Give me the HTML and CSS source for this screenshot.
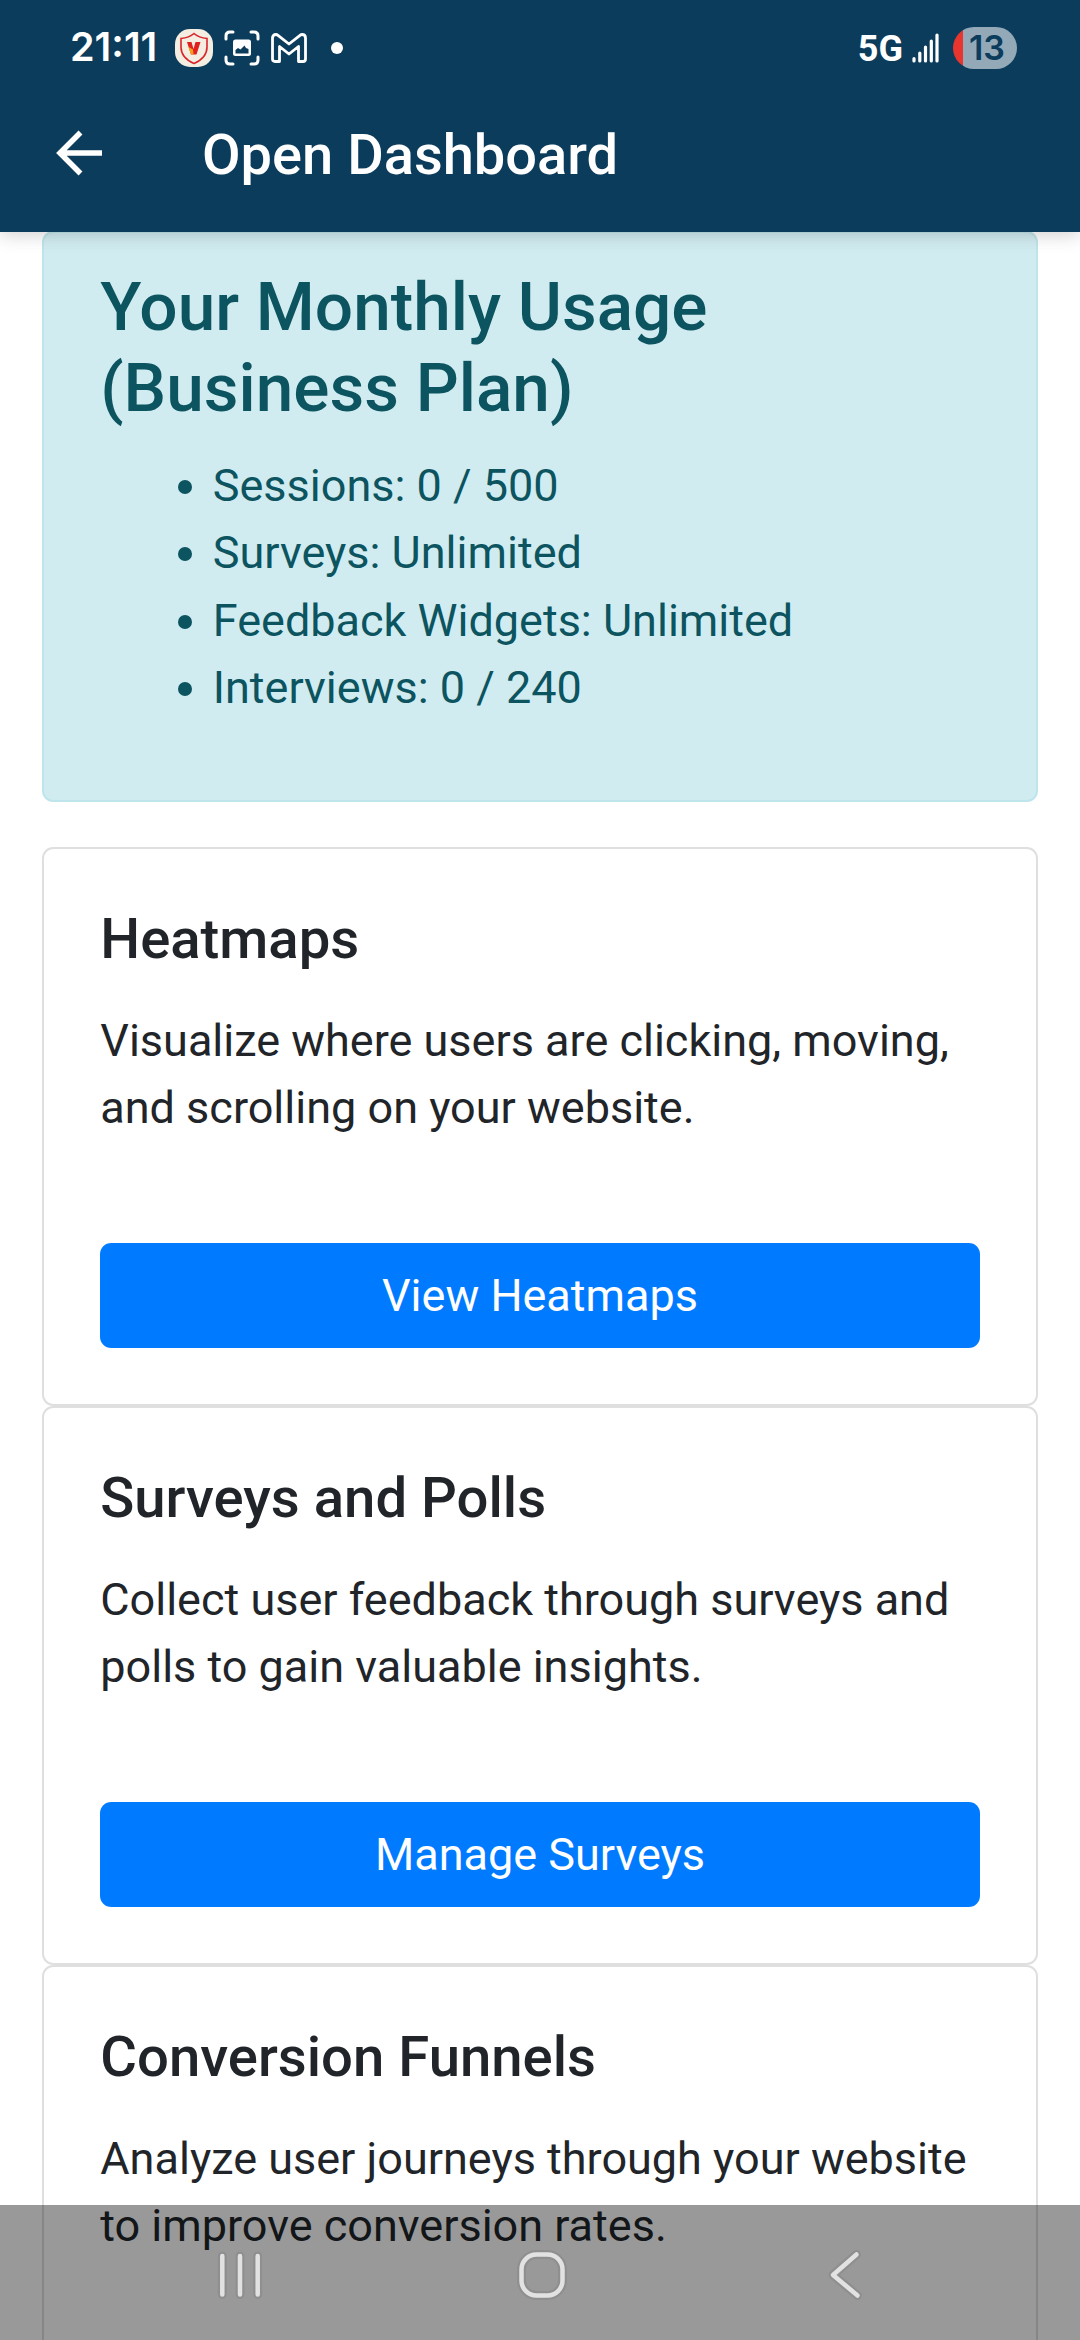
FILE: index.html
```html
<!DOCTYPE html>
<html lang="en">
<head>
    <meta charset="UTF-8">
    <title>Open Dashboard</title>
    <link rel="stylesheet" href="styles.css">
</head>
<body>
    <header class="app-header">
        <div class="status-bar">
            <span class="clock">21:11</span>
            <svg class="shield" width="38" height="38" viewBox="0 0 38 38">
                <rect width="38" height="38" rx="15" fill="#f4ede1"/>
                <path d="M19 4.500C15 8 11 9 6 9.500V18C6 26 11 31 19 34.500C27 31 32 26 32 18V9.500C27 9 23 8 19 4.500Z" fill="none" stroke="#d9252b" stroke-width="1.600"/>
                <path d="M12 13H16.500L18.500 20L20.500 13H25.500L21.500 25.500H16Z" fill="#e0211f"/>
                <path d="M13.500 18L18 20.500L18.500 25.500H16Z" fill="#f6a01c"/>
            </svg>
            <svg class="capture" width="36" height="36" viewBox="0 0 36 36">
                <path d="M2 9V6Q2 2 6 2H9M27 2H30Q34 2 34 6V9M34 27V30Q34 34 30 34H27M9 34H6Q2 34 2 30V27" fill="none" stroke="#fff" stroke-width="3" stroke-linecap="round"/>
                <rect x="9" y="9.500" width="18" height="16.500" rx="2.500" fill="#fff"/>
                <path d="M11.500 23.500V20L14 18L16.500 19.500L20.500 15.500L22 18L24.500 19V23.500Z" fill="#0c3c5c"/>
            </svg>
            <svg class="mail" width="36" height="30" viewBox="0 0 36 30" fill="none" stroke="#fff" stroke-width="2.800" stroke-linejoin="round">
                <path d="M1.500 5Q1.500 1.500 5 1.500Q6 1.500 7 2.300L18 11L29 2.300Q30 1.500 31 1.500Q34.500 1.500 34.500 5V26Q34.500 28.500 32 28.500H27.500V13.500L18 21L8.500 13.500V28.500H4Q1.500 28.500 1.500 26Z"/>
            </svg>
            <span class="dot"></span>
            <span class="network">5G</span>
            <svg class="signal" width="28" height="30" viewBox="0 0 28 30" stroke="#fff" stroke-width="3.200" stroke-linecap="round">
                <path d="M2 25.500V28M7.800 20V28M13.500 14V28M19.300 8V28M25 2V28"/>
            </svg>
            <span class="battery">13</span>
        </div>
        <div class="title-bar">
            <svg class="back" width="46" height="46" viewBox="0 0 46 46" fill="none" stroke="#fff" stroke-width="5.500">
                <path d="M46 23H4M24.500 2.500L4 23L24.500 43.500"/>
            </svg>
            <h1>Open Dashboard</h1>
        </div>
    </header>

    <main class="container">
        <div class="alert">
            <h4>Your Monthly Usage (Business Plan)</h4>
            <ul>
                <li>Sessions: 0 / 500</li>
                <li>Surveys: Unlimited</li>
                <li>Feedback Widgets: Unlimited</li>
                <li>Interviews: 0 / 240</li>
            </ul>
        </div>

        <div class="card">
            <h5>Heatmaps</h5>
            <p>Visualize where users are clicking, moving, and scrolling on your website.</p>
            <a class="btn">View Heatmaps</a>
        </div>
        <div class="card">
            <h5>Surveys and Polls</h5>
            <p>Collect user feedback through surveys and polls to gain valuable insights.</p>
            <a class="btn">Manage Surveys</a>
        </div>
        <div class="card">
            <h5>Conversion Funnels</h5>
            <p>Analyze user journeys through your website to improve conversion rates.</p>
        </div>
    </main>

    <nav class="nav-bar">
        <svg width="1080" height="135" viewBox="0 0 1080 135" fill="none" stroke-linecap="round" stroke-linejoin="round">
            <g stroke="#8f8f8f" stroke-width="9">
                <path d="M222.300 51V89.500M240 51V89.500M257.700 51V89.500"/>
                <rect x="521.500" y="49.500" width="41" height="41" rx="15"/>
                <path d="M856.500 49.500L833 70L857.500 90.500"/>
            </g>
            <g stroke="#e2e2e2" stroke-width="4.500">
                <path d="M222.300 51V89.500M240 51V89.500M257.700 51V89.500"/>
                <rect x="521.500" y="49.500" width="41" height="41" rx="15"/>
                <path d="M856.500 49.500L833 70L857.500 90.500"/>
            </g>
        </svg>
    </nav>
</body>
</html>
```
FILE: styles.css
```css
* {
    box-sizing: border-box;
}

body {
    margin: 0;
    height: 2340px;
    overflow: hidden;
    font-family: Roboto, sans-serif;
    font-size: 45px;
    line-height: 67.5px;
    color: #212529;
    background-color: #fff;
}

h1, h4, h5, p, ul {
    margin: 0;
    font-weight: 500;
}

/* header */
.app-header {
    position: relative;
    z-index: 1;
    height: 232px;
    color: #fff;
    background-color: #0c3c5c;
    box-shadow: 0 2px 18px rgba(0, 0, 0, 0.2);
}

.status-bar {
    display: flex;
    align-items: center;
    height: 96px;
    padding: 0 63px 0 70px;
}

.clock {
    width: 105px;
    font-family: Inter, sans-serif;
    font-size: 39.5px;
    font-weight: 600;
}

.capture {
    margin-left: 11px;
}

.mail {
    margin-left: 11px;
}

.dot {
    width: 12px;
    height: 12px;
    margin-left: 24px;
    border-radius: 50%;
    background-color: #fff;
}

.network {
    margin-left: auto;
    padding-top: 3px;
    font-size: 36px;
    font-weight: 700;
}

.signal {
    margin-left: 9px;
}

.battery {
    width: 64px;
    height: 42px;
    margin-left: 13px;
    padding-left: 4px;
    border-radius: 21px;
    font-family: Inter, sans-serif;
    font-size: 34px;
    font-weight: 600;
    line-height: 42px;
    text-align: center;
    color: #0c3c5c;
    background: linear-gradient(to right, #e8352e 10px, #93a9b8 10px);
}

.title-bar {
    display: flex;
    align-items: center;
    height: 114px;
    padding-left: 56px;
}

.title-bar h1 {
    margin-left: 100px;
    padding-top: 6px;
    font-size: 56px;
}

/* content */
.container {
    margin-top: -1px;
    padding: 0 42px;
}

.alert {
    margin-bottom: 45px;
    padding: 33px 56.25px 34.5px;
    border: 2px solid #bee5eb;
    border-radius: 11.25px;
    color: #0c5460;
    background-color: #d1ecf1;
}

.alert h4 {
    margin-bottom: 23.5px;
    font-size: 67.5px;
    line-height: 81px;
}

.alert ul {
    margin-bottom: 44px;
    padding-left: 112.5px;
    font-weight: 400;
}

.card {
    padding: 57px 56.25px 56.25px;
    border: 2px solid #dfdfdf;
    border-radius: 11.25px;
}

.card h5 {
    margin-bottom: 33px;
    font-size: 56.25px;
    line-height: 67.5px;
}

.card p {
    margin-bottom: 101.25px;
    font-weight: 400;
}

.btn {
    display: block;
    padding: 18.75px 0;
    border-radius: 11.25px;
    text-align: center;
    color: #fff;
    background-color: #007bff;
}

/* system navigation, over the page */
.nav-bar {
    position: fixed;
    bottom: 0;
    left: 0;
    z-index: 2;
    width: 1080px;
    height: 135px;
    background-color: rgba(0, 0, 0, 0.4);
}
```
